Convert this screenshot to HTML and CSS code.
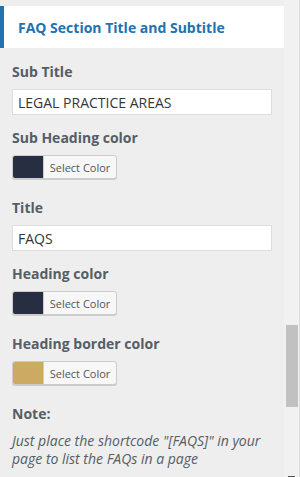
FILE: index.html
```html
<!DOCTYPE html>
<html>
<head>
<meta charset="utf-8">
<link rel="stylesheet" href="styles.css">
</head>
<body>
<div class="frame">
  <div class="panel">
    <div class="section-head">FAQ Section Title and Subtitle</div>
    <div class="controls">
      <div class="control">
        <label class="label">Sub Title</label>
        <input class="text-input" type="text" value="LEGAL PRACTICE AREAS">
      </div>
      <div class="control">
        <label class="label">Sub Heading color</label>
        <button class="color-btn"><span class="swatch swatch-dark"></span><span class="btn-text">Select Color</span></button>
      </div>
      <div class="control">
        <label class="label">Title</label>
        <input class="text-input" type="text" value="FAQS">
      </div>
      <div class="control">
        <label class="label">Heading color</label>
        <button class="color-btn"><span class="swatch swatch-dark"></span><span class="btn-text">Select Color</span></button>
      </div>
      <div class="control">
        <label class="label">Heading border color</label>
        <button class="color-btn"><span class="swatch swatch-gold"></span><span class="btn-text">Select Color</span></button>
      </div>
      <div class="control note">
        <div class="label">Note:</div>
        <p class="note-text">Just place the shortcode "[FAQS]" in your page to list the FAQs in a page</p>
      </div>
    </div>
  </div>
  <div class="scrollbar">
    <div class="track-top"></div>
    <div class="thumb"></div>
    <div class="track-bottom"><span class="arrow"></span></div>
  </div>
</div>
</body>
</html>
```
FILE: styles.css
```css
html, body {
  margin: 0;
  padding: 0;
  height: 100%;
  overflow: hidden;
}
body {
  background: #eeeeee;
  font-family: "Open Sans", "Noto Sans", sans-serif;
  color: #555d66;
}
.frame {
  display: flex;
  height: 477px;
}
.panel {
  flex: 1;
  padding-top: 6px;
}
.section-head {
  height: 42px;
  background: #ffffff;
  border-left: 4px solid #2271b1;
  box-sizing: border-box;
  padding-left: 14px;
  display: flex;
  align-items: center;
  font-size: 14px;
  font-weight: 700;
  color: #2271b1;
}
.controls {
  padding: 0 12px;
}
.control {
  display: flex;
  flex-direction: column;
  align-items: flex-start;
  margin-top: 13px;
}
.control:first-child {
  margin-top: 14px;
}
.label {
  font-size: 14px;
  font-weight: 700;
  line-height: 20px;
  color: #555d66;
  margin-bottom: 7px;
}
.note .label {
  margin-bottom: 8px;
}
.text-input {
  width: 260px;
  height: 26px;
  box-sizing: border-box;
  border: 1px solid #dddddd;
  background: #ffffff;
  padding: 0 5px;
  font-family: inherit;
  font-size: 14px;
  color: #32373c;
  outline: none;
  margin: 0;
}
.color-btn {
  display: flex;
  width: 105px;
  height: 24px;
  padding: 0;
  margin: 0 0 6px 0;
  border: 1px solid #cccccc;
  border-radius: 3px;
  background: #f7f7f7;
  box-shadow: 0 1px 0 #cccccc;
  overflow: hidden;
  font-family: inherit;
  cursor: pointer;
}
.swatch {
  width: 30px;
  height: 100%;
  border-right: 1px solid #cccccc;
}
.swatch-dark { background: #282e41; }
.swatch-gold { background: #cdaa63; }
.btn-text {
  flex: 1;
  display: flex;
  align-items: center;
  justify-content: center;
  font-size: 11px;
  color: #555555;
}
.note-text {
  margin: 0;
  font-size: 14px;
  font-style: italic;
  line-height: 18px;
  color: #555d66;
}
.scrollbar {
  width: 16px;
  display: flex;
  flex-direction: column;
  background: #f1f1f1;
  border-right: 1px solid #dcdcdc;
  box-sizing: border-box;
}
.track-top { height: 325px; }
.thumb {
  height: 82px;
  margin: 0 1px 0 2px;
  background: #c1c1c1;
}
.track-bottom {
  flex: 1;
  display: flex;
  align-items: flex-end;
  justify-content: center;
}
.arrow {
  width: 7px;
  height: 1px;
  background: #505050;
}
```
